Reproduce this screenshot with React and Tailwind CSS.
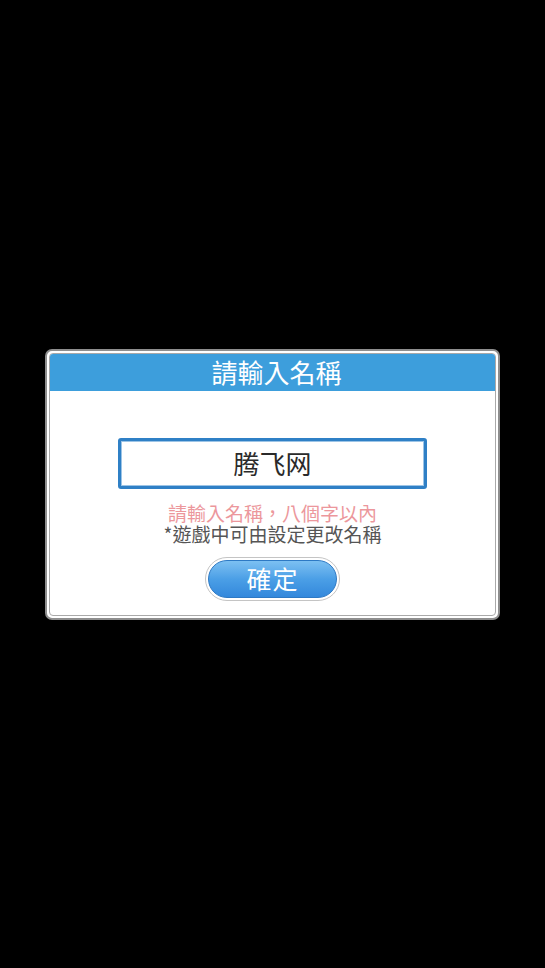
import React from 'react';

const cjk = { fontFamily: '"Noto Sans CJK TC", "Noto Sans CJK SC", sans-serif' };

export default function App() {
  return (
    <div className="w-[545px] h-[968px] bg-black flex items-center justify-center" style={cjk}>
      {/* Name dialog */}
      <div className="w-[455px] h-[271px] rounded-[7px] border-2 border-[#8e8e8e] bg-white p-[2px]">
        <div className="h-full rounded-[4px] border border-[#a9a9a9] overflow-hidden flex flex-col items-center">
          <div className="w-full h-[37px] bg-[#3d9edc] flex items-center justify-center">
            <span className="pl-[8px] text-white text-[26px] leading-none">請輸入名稱</span>
          </div>

          <div className="mt-[47px] w-[309px] h-[51px] rounded-[3px] border-[3px] border-[#2f80c6] bg-white shadow-[inset_0_0_0_1px_#9cc4e6] flex items-center justify-center">
            <span className="text-[#2a2a2a] text-[26px] leading-none">腾飞网</span>
          </div>

          <p className="mt-[13px] text-[19px] leading-[21px] text-[#ec979c]">請輸入名稱，八個字以內</p>
          <p className="text-[19px] leading-[21px] text-[#555]">*遊戲中可由設定更改名稱</p>

          <button className="mt-[13px] w-[135px] h-[44px] rounded-full border border-[#c4c4c4] bg-white p-[2px]">
            <div className="h-full rounded-full border border-[#2d79c4] bg-gradient-to-b from-[#7cc0f2] via-[#4b9fe6] to-[#3388dc] flex items-center justify-center">
              <span className="text-white text-[25px] leading-none tracking-[1px]">確定</span>
            </div>
          </button>
        </div>
      </div>
    </div>
  );
}
